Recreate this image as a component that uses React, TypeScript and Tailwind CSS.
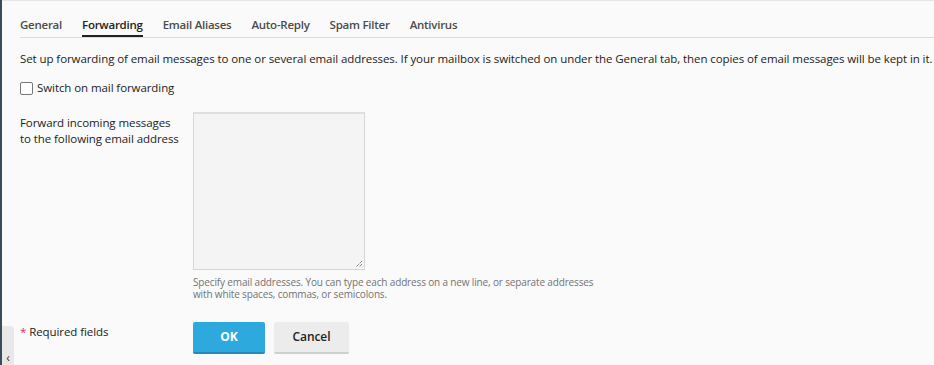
const tabs = ['General', 'Forwarding', 'Email Aliases', 'Auto-Reply', 'Spam Filter', 'Antivirus'];

export default function App() {
  return (
    <div className="relative h-[365px] w-[934px] overflow-hidden bg-[#fafafa] font-['Open_Sans',sans-serif] text-[11.5px] tracking-[-0.08px] text-[#222] border-l-2 border-[#3b4a5c]">
      <div className="h-px bg-[#e6e6e6]" />
      <div className="pl-[18px]">
        <ul className="flex gap-5 border-b border-[#dcdcdc] pt-[14px] tracking-[-0.25px]">
          {tabs.map(tab => (
            <li
              key={tab}
              className={
                tab === 'Forwarding'
                  ? 'h-[22px] border-b-2 border-[#222] mb-[-1px] font-semibold text-[#222] leading-[20px]'
                  : 'h-[22px] font-semibold text-[#4b4b4b] leading-[20px]'
              }
            >
              {tab}
            </li>
          ))}
        </ul>
        <p className="mt-[12px] whitespace-nowrap leading-[18px]">
          Set up forwarding of email messages to one or several email addresses. If your mailbox is switched on under the General tab, then copies of email messages will be kept in it.
        </p>
        <label className="mt-[11px] flex items-center gap-[4px] leading-[18px]">
          <span className="h-[13px] w-[13px] rounded-[2px] border border-[#777] bg-white" />
          Switch on mail forwarding
        </label>
        <div className="mt-[15px] flex">
          <div className="w-[173px] pt-[3px] leading-[16px]">
            Forward incoming messages
            <br />
            to the following email address
          </div>
          <div>
            <div className="relative h-[158px] w-[172px] border border-[#d6d6d6] border-t-2 border-t-[#dedede] bg-[#f4f4f4]">
              <svg className="absolute bottom-[1px] right-[1px]" width="9" height="9" viewBox="0 0 9 9">
                <path d="M8 2 L2 8 M8 5 L5 8" stroke="#555" strokeWidth="1" strokeDasharray="1 1" />
              </svg>
            </div>
            <p className="mt-[6px] w-[420px] text-[10px] tracking-[-0.15px] leading-[12px] text-[#737373]">
              Specify email addresses. You can type each address on a new line, or separate addresses
              <br />
              with white spaces, commas, or semicolons.
            </p>
          </div>
        </div>
        <div className="mt-[22px] flex">
          <div className="w-[173px] pt-[2px] leading-[16px]">
            <span className="text-[#d02d68]">*</span> Required fields
          </div>
          <div className="flex gap-[9px]">
            <button className="h-[32px] w-[72px] rounded-[2px] border-b-2 border-[#1e8dbd] bg-[#2ea9dd] text-[12px] font-bold text-white">
              OK
            </button>
            <button className="h-[32px] w-[75px] rounded-[2px] border-b-2 border-[#cfcfcf] bg-[#ececec] text-[12px] font-semibold text-[#222]">
              Cancel
            </button>
          </div>
        </div>
      </div>
      <div className="absolute bottom-0 left-0 flex h-[39px] w-[12px] items-end justify-center rounded-tr-[4px] bg-[#e8e8e8] pb-[1px] text-[12px] leading-[12px] text-[#333]">
        ‹
      </div>
    </div>
  );
}
